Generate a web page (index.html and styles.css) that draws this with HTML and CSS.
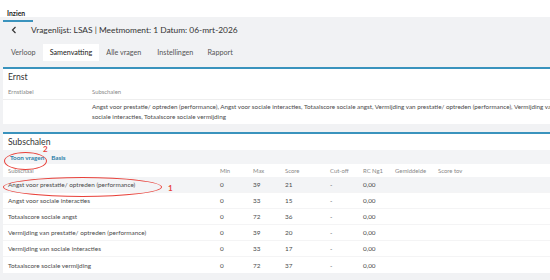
FILE: index.html
```html
<!DOCTYPE html>
<html lang="nl">
<head>
  <meta charset="UTF-8" />
  <title>Inzien - Vragenlijst</title>
  <link rel="stylesheet" href="styles.css">
</head>
<body>

  <div class="topbar">
    <span class="top-tab">Inzien</span>
  </div>

  <div class="main">
    <div class="header">
      <svg class="back" width="6" height="8" viewBox="0 0 6 8"><path d="M4.5 1 L1.5 4 L4.5 7" fill="none" stroke="#333" stroke-width="1.2"/></svg>
      <span class="title">Vragenlijst: LSAS | Meetmoment: 1 Datum: 06-mrt-2026</span>
    </div>

    <nav class="tabs">
      <a>Verloop</a>
      <a class="active">Samenvatting</a>
      <a>Alle vragen</a>
      <a>Instellingen</a>
      <a>Rapport</a>
    </nav>

    <div class="card">
      <div class="card-title">Ernst</div>
      <div class="ernst-row head">
        <span>Ernstlabel</span>
        <span>Subschalen</span>
      </div>
      <div class="ernst-row body">
        <span></span>
        <span>Angst voor prestatie/ optreden (performance), Angst voor sociale interacties, Totaalscore sociale angst, Vermijding van prestatie/ optreden (performance), Vermijding van sociale interacties, Totaalscore sociale vermijding</span>
      </div>
    </div>

    <div class="card subschalen">
      <div class="card-title">Subschalen</div>
      <div class="toolbar">
        <a class="link">Toon vragen</a>
        <a class="link">Basis</a>
      </div>
      <div class="score-row head">
        <span>Subschaal</span><span>Min</span><span>Max</span><span>Score</span><span>Cut-off</span><span>RC Ng1</span><span>Gemiddelde</span><span>Score tov</span>
      </div>
      <div class="score-row hl">
        <span>Angst voor prestatie/ optreden (performance)</span><span>0</span><span>39</span><span>21</span><span>-</span><span>0,00</span><span></span><span></span>
      </div>
      <div class="score-row">
        <span>Angst voor sociale interacties</span><span>0</span><span>33</span><span>15</span><span>-</span><span>0,00</span><span></span><span></span>
      </div>
      <div class="score-row">
        <span>Totaalscore sociale angst</span><span>0</span><span>72</span><span>36</span><span>-</span><span>0,00</span><span></span><span></span>
      </div>
      <div class="score-row">
        <span>Vermijding van prestatie/ optreden (performance)</span><span>0</span><span>39</span><span>20</span><span>-</span><span>0,00</span><span></span><span></span>
      </div>
      <div class="score-row">
        <span>Vermijding van sociale interacties</span><span>0</span><span>33</span><span>17</span><span>-</span><span>0,00</span><span></span><span></span>
      </div>
      <div class="score-row last">
        <span>Totaalscore sociale vermijding</span><span>0</span><span>72</span><span>37</span><span>-</span><span>0,00</span><span></span><span></span>
      </div>

      <!-- annotations drawn over the screenshot -->
      <div class="ring ring-toon"></div>
      <span class="mark mark-toon">2</span>
      <div class="ring ring-row"></div>
      <span class="mark mark-row">1</span>
    </div>
  </div>

</body>
</html>
```

FILE: styles.css
```css
body {
  margin: 0;
  font-family: Lato, 'Open Sans', sans-serif;
  color: #444;
  background: #f1f2f4;
  width: 565px;
  overflow: hidden;
}
.topbar {
  background: white;
  height: 17px;
}
.top-tab {
  display: inline-block;
  margin-left: 3px;
  padding: 4px 4px 0 4px;
  height: 11px;
  width: 22px;
  font-size: 6.8px;
  font-weight: bold;
  color: #222;
  border-bottom: 2px solid #3a93bd;
}
.main {
  padding-left: 3px;
}
.header {
  display: flex;
  align-items: center;
  height: 25px;
}
.back {
  margin-left: 8px;
  margin-right: 14px;
  margin-top: 1px;
}
.title {
  font-size: 8.4px;
  color: #333;
  margin-top: 1px;
}
.tabs {
  display: flex;
  height: 17px;
  margin-top: 2px;
  margin-bottom: 6px;
}
.tabs a {
  display: flex;
  align-items: center;
  padding: 0 7px;
  font-size: 7.2px;
  color: #555;
}
.tabs a:first-child {
  padding-left: 8px;
}
.tabs a:nth-child(3) {
  margin-right: 2px;
}
.tabs a.active {
  background: white;
  color: #222;
}
.card {
  background: white;
  border-top: 2px solid #3a93bd;
  margin-bottom: 8px;
}
.card-title {
  height: 15px;
  line-height: 16px;
  padding-left: 5px;
  font-size: 8.6px;
  color: #333;
}
.ernst-row {
  display: grid;
  grid-template-columns: 84px 1fr;
  padding-left: 5px;
  font-size: 5.9px;
}
.ernst-row.head {
  height: 15px;
  line-height: 16px;
  color: #888;
  border-bottom: 1px solid #eee;
}
.ernst-row.body {
  padding-top: 2px;
  padding-bottom: 2px;
  line-height: 10px;
  color: #4a4a4a;
  font-size: 6.3px;
}
.subschalen {
  position: relative;
  margin-bottom: 0;
  height: 139px;
}
.toolbar {
  display: flex;
  gap: 7px;
  height: 14px;
  margin-top: 1px;
  align-items: center;
  padding-left: 7px;
  background: #f3f4f6;
}
.link {
  font-size: 6.3px;
  font-weight: bold;
  color: #2b7ea8;
}
.score-row {
  display: grid;
  grid-template-columns: 212px 33px 32px 45px 33px 32px 43px 1fr;
  padding-left: 5px;
  height: 16px;
  align-items: center;
  font-size: 6.4px;
  color: #4a4a4a;
  border-bottom: 1px solid #f4f4f5;
  box-sizing: border-box;
}
.score-row.head {
  height: 13px;
  color: #888;
  font-size: 5.9px;
  border-bottom: none;
}
.score-row.hl {
  background: #f3f4f6;
}
.score-row.last {
  border-bottom: none;
}
.ring {
  position: absolute;
  border: 1px solid #e8413a;
  border-radius: 50%;
}
.ring-toon {
  left: 1px;
  top: 18px;
  width: 41px;
  height: 16px;
}
.ring-row {
  left: 0;
  top: 43px;
  width: 157px;
  height: 18px;
}
.mark {
  position: absolute;
  color: #e8413a;
  font-size: 8px;
  font-weight: bold;
}
.mark-toon {
  left: 40px;
  top: 10px;
}
.mark-row {
  left: 165px;
  top: 49px;
}
```
